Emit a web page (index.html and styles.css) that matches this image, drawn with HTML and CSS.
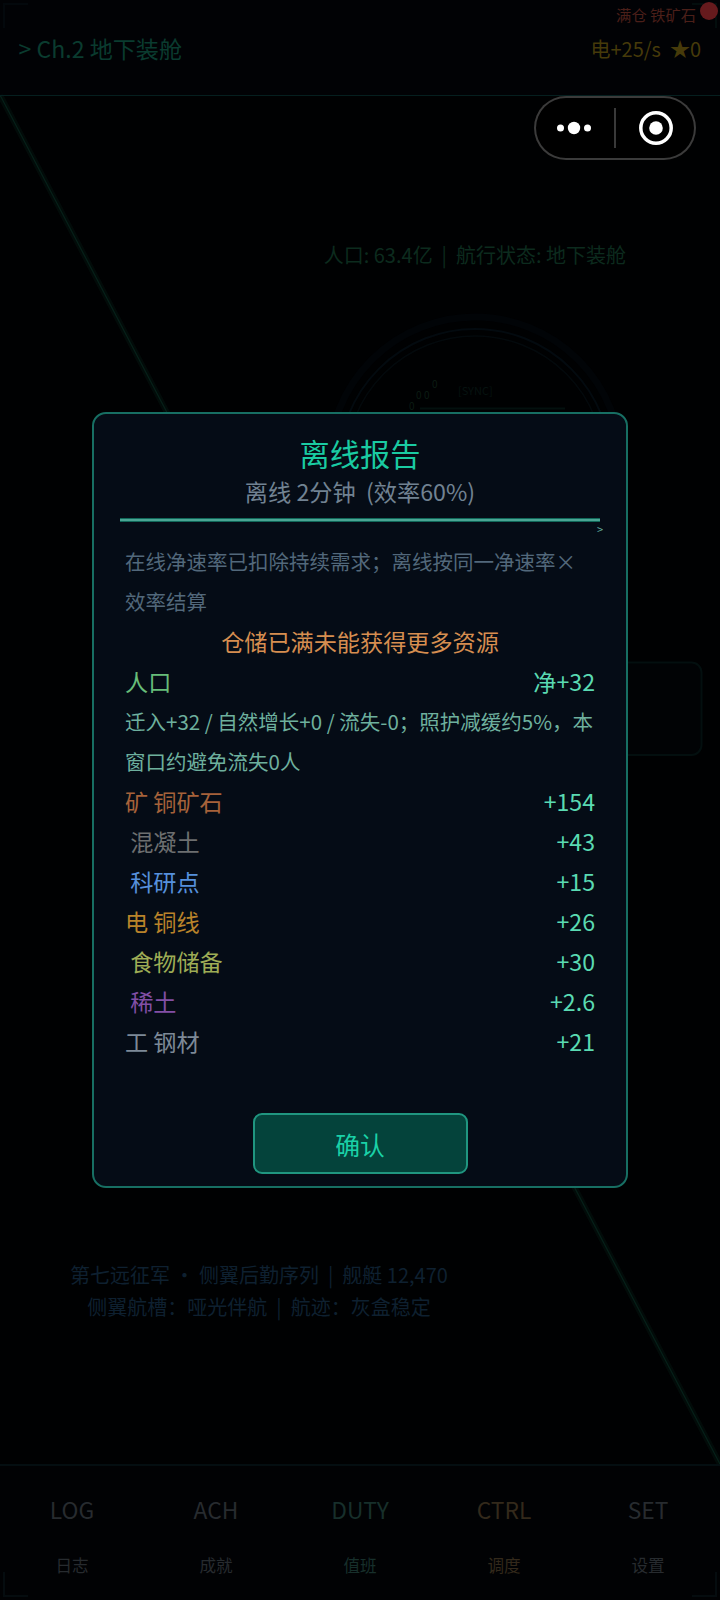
FILE: index.html
```html
<!DOCTYPE html>
<html lang="zh-CN">
<head>
<meta charset="utf-8">
<title>离线报告</title>
<link rel="stylesheet" href="styles.css">
</head>
<body>
<div class="screen">
  <svg class="scene" width="720" height="1600" viewBox="0 0 720 1600" fill="none">
    <path d="M0 95L720 1464" stroke="#020b09" stroke-width="6"/>
    <path d="M0 95L720 1464" stroke="#062019" stroke-width="1.200"/>
    <circle cx="475" cy="463" r="146" stroke="#010407" stroke-width="7"/>
    <circle cx="475" cy="465" r="136" stroke="#030a0f" stroke-width="2"/>
    <circle cx="475" cy="465" r="129" stroke="#03090c" stroke-width="1.500"/>
    <path d="M420 408.500H565" stroke="#03100e" stroke-width="2"/>
    <rect x="380" y="662.500" width="321.500" height="92.500" rx="10" fill="#010305" stroke="#030f0f" stroke-width="2"/>
    <path d="M4 28V4H28" stroke="#061113" stroke-width="2"/>
    <path d="M692 4H716V28" stroke="#061c16" stroke-width="2"/>
  </svg>

  <header class="topbar">
    <div class="alert">满仓 铁矿石</div>
    <div class="chapter">&gt; Ch.2 地下装舱</div>
    <div class="power">电+25/s  ★0</div>
    <span class="alert-dot"></span>
  </header>

  <main class="stage">
    <div class="population">人口: 63.4亿  |  航行状态: 地下装舱</div>
    <div class="glyphs"><span class="g1">0</span><span class="g2">0</span><span class="g3">0</span><span class="g4">0</span><span class="sync">[SYNC]</span></div>
    <div class="fleet">
      <div>第七远征军 · 侧翼后勤序列  |  舰艇 12,470</div>
      <div>侧翼航槽：哑光伴航  |  航迹：灰盒稳定</div>
    </div>
  </main>

  <nav class="tabs">
    <div class="tab"><b>LOG</b><span>日志</span></div>
    <div class="tab"><b>ACH</b><span>成就</span></div>
    <div class="tab duty"><b>DUTY</b><span>值班</span></div>
    <div class="tab ctrl"><b>CTRL</b><span>调度</span></div>
    <div class="tab"><b>SET</b><span>设置</span></div>
    <svg class="brackets" width="720" height="30" viewBox="0 0 720 30" fill="none" stroke="#050c0f" stroke-width="2"><path d="M4 2V26H28M692 26H716V2"/></svg>
  </nav>

  <div class="capsule">
    <svg width="162" height="64" viewBox="0 0 162 64" fill="#fff">
      <circle cx="26.500" cy="32" r="3.500"/><circle cx="40" cy="32" r="6.200"/><circle cx="53.500" cy="32" r="3.500"/>
      <path d="M81 12V52" stroke="#444" stroke-width="1.700"/>
      <circle cx="122" cy="32" r="15.200" fill="none" stroke="#fff" stroke-width="3.500"/><circle cx="122" cy="32" r="6.800"/>
    </svg>
  </div>

  <section class="dialog">
    <h1>离线报告</h1>
    <div class="subtitle">离线 2分钟  (效率60%)</div>
    <div class="rule"><span>&gt;</span></div>
    <div class="report">
      <p class="note">在线净速率已扣除持续需求；离线按同一净速率×<br>效率结算</p>
      <p class="warning">仓储已满未能获得更多资源</p>
      <div class="row people"><span>人口</span><em>净+32</em></div>
      <p class="detail">迁入+32 / 自然增长+0 / 流失-0；照护减缓约5%，本<br>窗口约避免流失0人</p>
      <div class="row copper"><span>矿 铜矿石</span><em>+154</em></div>
      <div class="row concrete"><span> 混凝土</span><em>+43</em></div>
      <div class="row science"><span> 科研点</span><em>+15</em></div>
      <div class="row wire"><span>电 铜线</span><em>+26</em></div>
      <div class="row food"><span> 食物储备</span><em>+30</em></div>
      <div class="row rare"><span> 稀土</span><em>+2.6</em></div>
      <div class="row steel"><span>工 钢材</span><em>+21</em></div>
    </div>
    <button class="confirm">确认</button>
  </section>
</div>
</body>
</html>
```
FILE: styles.css
```css
* { box-sizing: border-box; margin: 0; padding: 0; }
body {
  background: #000;
  font-family: "Noto Sans CJK SC", sans-serif;
  font-weight: 400;
}
.screen {
  position: relative;
  width: 720px;
  height: 1600px;
  overflow: hidden;
  display: flex;
  flex-direction: column;
  background: #000102;
}
.scene { position: absolute; left: 0; top: 0; }

.topbar {
  height: 96px;
  flex: none;
  display: flex;
  justify-content: space-between;
  padding: 28px 19px 0 18.5px;
  background: rgba(1, 3, 8, .6);
  border-bottom: 1px solid #051f1f;
  position: relative;
}
.chapter, .power, .population, .fleet div, .subtitle, .row span { white-space: pre; }
.chapter { font-size: 23.1px; line-height: 40px; color: #0a3b2f; }
.power { font-size: 20px; line-height: 41px; color: #463a0a; }
.alert {
  position: absolute;
  right: 24px;
  top: 2px;
  font-size: 15.3px;
  line-height: 24px;
  color: #4b1f19;
}
.alert-dot {
  position: absolute;
  left: 700px;
  top: 2px;
  width: 18px;
  height: 18px;
  border-radius: 50%;
  background: #661a1d;
}

.stage {
  flex: 1;
  position: relative;
  display: flex;
  flex-direction: column;
  justify-content: space-between;
  padding: 143px 94px 141px 69px;
}
.population { align-self: flex-end; font-size: 20px; line-height: 32px; color: #0c2b1e; }
.fleet {
  width: 380px;
  font-size: 20px;
  line-height: 32px;
  text-align: center;
  color: #0e2030;
}
.glyphs span { position: absolute; font-size: 10px; line-height: 12px; color: #0b1c13; }
.glyphs .g1 { left: 432px; top: 282px; }
.glyphs .g2 { left: 416px; top: 293px; }
.glyphs .g3 { left: 424px; top: 293px; }
.glyphs .g4 { left: 409px; top: 304px; }
.glyphs .sync { left: 458px; top: 288px; font-size: 11px; color: #061210; }

.tabs {
  height: 136px;
  flex: none;
  display: flex;
  position: relative;
  background: #010204;
  border-top: 2px solid #040e11;
}
.tab {
  flex: 1;
  display: flex;
  flex-direction: column;
  align-items: center;
  padding-top: 24px;
  color: #272b2f;
}
.tab b { font-weight: 400; font-size: 22.8px; line-height: 40px; }
.tab span { font-size: 16.6px; line-height: 24px; margin-top: 23px; }
.tab.duty { color: #172f2b; }
.tab.ctrl { color: #33291b; }
.brackets { position: absolute; left: 0; bottom: 0; }

.capsule {
  position: absolute;
  left: 534px;
  top: 96px;
  width: 162px;
  height: 64px;
  border-radius: 32px;
  background: #000;
  box-shadow: inset 0 0 0 2px #3b3b3b;
}
.capsule svg { display: block; }

.dialog {
  position: absolute;
  left: 92px;
  top: 412px;
  width: 536px;
  height: 776px;
  border: 2px solid #176f63;
  border-radius: 14px;
  background: #050c16;
  display: flex;
  flex-direction: column;
  align-items: center;
  padding-top: 19px;
}
.dialog h1 { font-size: 30.2px; line-height: 40px; font-weight: 400; color: #1acba2; }
.subtitle { font-size: 23.2px; line-height: 34px; margin-top: 1px; color: #718292; }
.rule {
  width: 480px;
  height: 4px;
  margin-top: 10px;
  background: #4ba594;
  border: solid #11695a;
  border-width: 1px 0;
  position: relative;
}
.rule span {
  position: absolute;
  right: -3px;
  top: 3px;
  font-size: 11px;
  line-height: 14px;
  color: #62ab9c;
}
.report {
  width: 470px;
  margin-top: 19px;
  font-size: 23.15px;
  line-height: 40px;
}
.note { font-size: 20.5px; color: #52687b; }
.warning { text-align: center; color: #d68e50; }
.detail { font-size: 20.5px; color: #6eb09e; }
.row { display: flex; justify-content: space-between; }
.row em { font-style: normal; color: #5adab2; }
.people { color: #67bd79; }
.copper { color: #a5623a; }
.concrete { color: #6d6f70; }
.science { color: #5690dc; }
.wire { color: #b9832a; }
.food { color: #9eac55; }
.rare { color: #824fa5; }
.steel { color: #7d8997; }
.confirm {
  flex: none;
  width: 215px;
  height: 61px;
  margin-top: 52px;
  border: 2px solid #209680;
  border-radius: 9px;
  background: #04433b;
  color: #1ad1a7;
  font: 400 24.8px/56px "Noto Sans CJK SC", sans-serif;
}
```
